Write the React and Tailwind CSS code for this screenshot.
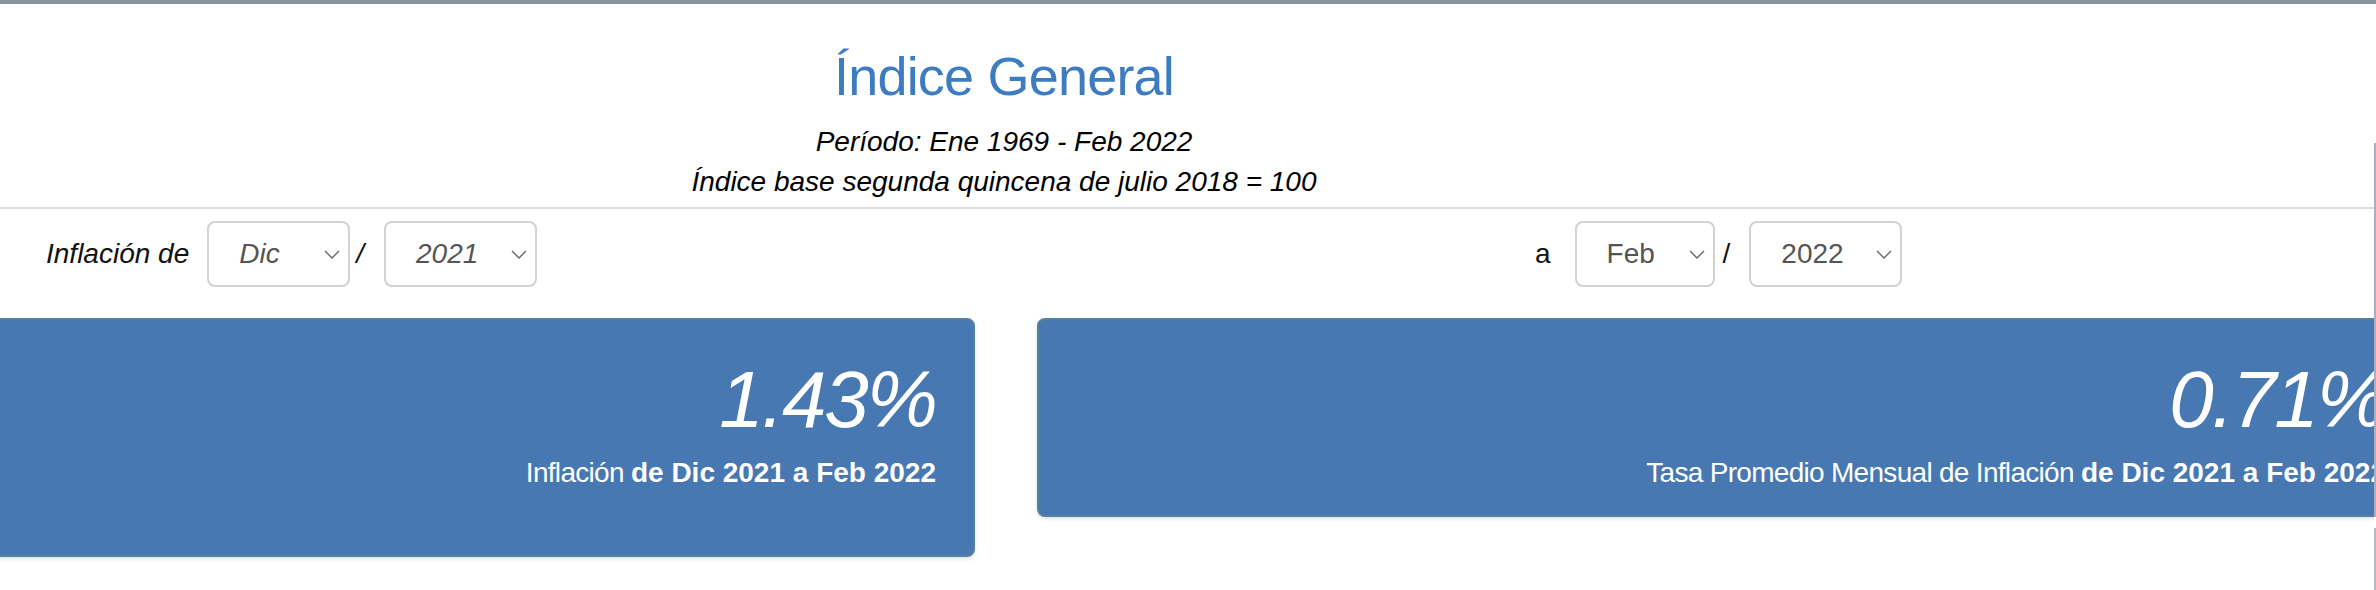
const Chevron = () => (
  <svg width="16" height="9" viewBox="0 0 16 9" className="mr-[8px] shrink-0" fill="none">
    <polyline points="1,1 8,8 15,1" stroke="#666" strokeWidth="1.4" />
  </svg>
);

function Select({ value, width, italic }) {
  return (
    <div
      className={`flex h-[66px] items-center rounded-[8px] border-2 border-[#d2d2d2] bg-white pl-[30px] text-[28px] text-[#555] ${width} ${italic ? 'italic' : ''}`}
    >
      <span>{value}</span>
      <span className="ml-auto">
        <Chevron />
      </span>
    </div>
  );
}

function Card({ value, label, pad }) {
  return (
    <div
      className={`w-[1388px] shrink-0 rounded-[8px] border-2 border-[#52829c] bg-[#4778b1] pr-[37px] pt-[40px] text-right text-white shadow-[0_2px_4px_rgba(0,0,0,0.12)] ${pad}`}
    >
      <div className="text-[80px] leading-[80px] italic tracking-[-2px]">{value}</div>
      <div className="mt-[13px] text-[28px] leading-[40px]">
        <span className="tracking-[-0.7px]">{label} </span>
        <b>de Dic 2021 a Feb 2022</b>
      </div>
    </div>
  );
}

export default function App() {
  return (
    <div className="relative h-[590px] w-[2376px] overflow-hidden bg-white font-['Liberation_Sans',Arial,sans-serif] text-[#111]">
      <div className="h-[4px] bg-[#8a939b]" />

      <div className="w-[2008px] text-center">
        <h1 className="mt-[42px] text-[54px] font-normal leading-[60px] tracking-[-0.8px] text-[#3e7cc2]">
          Índice General
        </h1>
        <p className="mt-[16px] text-[28px] leading-[40px] italic text-black">Período: Ene 1969 - Feb 2022</p>
        <p className="text-[28px] leading-[40px] italic text-black">Índice base segunda quincena de julio 2018 = 100</p>
      </div>

      <div className="mt-[5px] h-[2px] w-[2374px] bg-[#dedede]" />

      <div className="mt-[12px] flex items-center text-[28px]">
        <div className="flex w-[1535px] items-center pl-[46px]">
          <span className="italic">Inflación de</span>
          <div className="ml-[18px]">
            <Select value="Dic" width="w-[143px]" italic />
          </div>
          <span className="ml-[6px] mr-[20px] italic">/</span>
          <Select value="2021" width="w-[153px]" italic />
        </div>
        <div className="flex items-center">
          <span>a</span>
          <div className="ml-[24px]">
            <Select value="Feb" width="w-[140px]" />
          </div>
          <span className="ml-[8px] mr-[19px]">/</span>
          <Select value="2022" width="w-[153px]" />
        </div>
      </div>

      <div className="ml-[-413px] mt-[31px] flex items-start gap-[62px]">
        <Card value="1.43%" label="Inflación" pad="pb-[62px]" />
        <Card value="0.71%" label="Tasa Promedio Mensual de Inflación" pad="pb-[22px]" />
      </div>

      <div className="absolute left-[2374px] top-[143px] h-[374px] w-[2px] bg-[#a9b1c0]" />
      <div className="absolute left-[2374px] top-[517px] h-[11px] w-[2px] bg-white" />
      <div className="absolute bottom-0 left-[2374px] top-[528px] w-[2px] bg-[#b4bac6]" />
    </div>
  );
}
